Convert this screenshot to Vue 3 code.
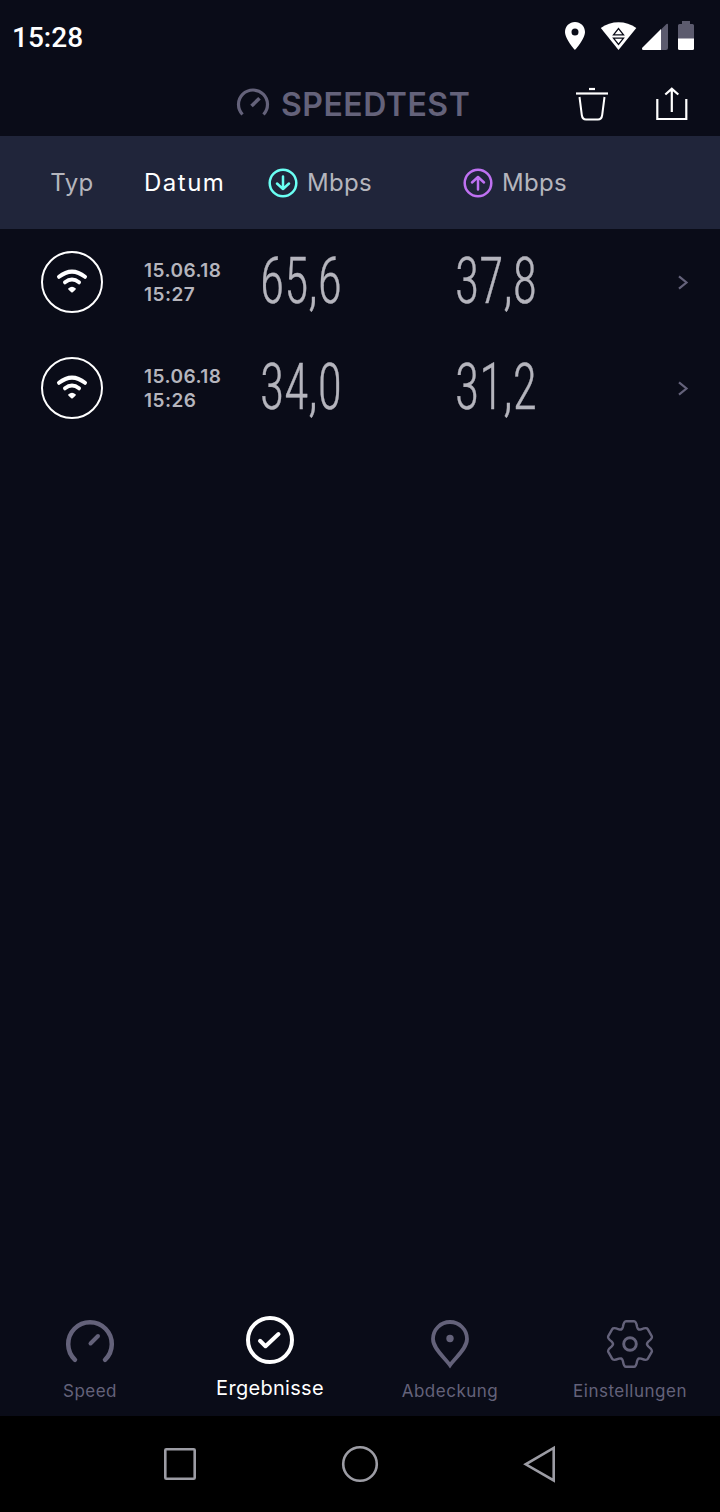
<template>
  <div class="screen">
    <!-- Status bar -->
    <div class="status-bar">
      <span class="clock">15:28</span>
      <svg class="status-icons" width="132" height="32" viewBox="0 0 132 32">
        <path fill="#fff" fill-rule="evenodd" d="M11 2C5.500 2 1 6.300 1 12c0 7 10 18 10 18s10-11 10-18C21 6.300 16.500 2 11 2zm0 6.500a3.500 3.500 0 1 1 0 7 3.500 3.500 0 0 1 0-7z" />
        <path fill="#fff" d="M36.800 8C47 .3 62 .3 72.300 8L54.500 30z" />
        <path fill="#fff" stroke="#0a0c18" stroke-width="1.300" d="M49.500 14.800 54.500 8.500l5 6.300zM49.500 18.200h10l-5 6.300z" />
        <path fill="#5c5b6e" d="M97 9.500 102.500 4q1.500-1 1.500.8V28q0 2-2 2h-5z" />
        <path fill="#fff" d="M97 9v21H79.500q-2.500-.5-1-2.500z" />
        <path fill="#5c5b6e" d="M114 19V5.500Q114 4 115.500 4H118V1h8v3h2.500q1.500 0 1.500 1.500V19z" />
        <path fill="#fff" d="M114 18.500h16v10q0 1.500-1.500 1.500h-13q-1.500 0-1.500-1.500z" />
      </svg>
    </div>

    <!-- App bar -->
    <header class="app-bar">
      <div class="brand">
        <svg width="34" height="32" viewBox="0 0 34 32" fill="none" stroke="#64627a" stroke-width="3.200">
          <path d="M6.500 26.500A14.500 14.500 0 1 1 27.500 26.500" />
          <path d="M15.500 18 23.500 10.300" stroke-width="3.600" />
        </svg>
        <span class="brand-name">SPEEDTEST</span>
      </div>
      <div class="actions">
        <svg width="32" height="34" viewBox="0 0 32 34" fill="none" stroke="#fff" stroke-width="2">
          <path d="M13 2h6" stroke-width="2.200" />
          <path d="M0 6.500h32" stroke-width="2.200" />
          <path d="M3.500 10 5.800 28q.6 4.500 4.200 4.500h12q3.600 0 4.200-4.500L28.500 10" />
        </svg>
        <svg width="32" height="34" viewBox="0 0 32 34" fill="none" stroke="#fff" stroke-width="2.200">
          <path d="M1.300 12v20h29V12" />
          <path d="M15.800 25V2.500M9.300 7.500l6.500-5.700 6.500 5.700" />
        </svg>
      </div>
    </header>

    <!-- Column titles -->
    <div class="grid table-head">
      <span class="col-type">Typ</span>
      <span class="active">Datum</span>
      <span v-for="dir in directions" :key="dir.name" class="unit" :class="dir.name">
        <svg width="30" height="30" viewBox="0 0 30 30" fill="none" stroke="currentColor" stroke-width="2.500">
          <circle cx="15" cy="15" r="13.300" />
          <path :d="dir.arrow" stroke-linecap="round" stroke-linejoin="round" />
        </svg>
        <span class="unit-name">Mbps</span>
      </span>
    </div>

    <!-- Results -->
    <main class="results">
      <div v-for="result in results" :key="result.time" class="grid row">
        <span class="col-type">
          <svg width="62" height="62" viewBox="0 0 62 62" fill="none" stroke="#fff">
            <circle cx="31" cy="31" r="30" stroke-width="2" />
            <g stroke-width="4" stroke-linecap="round">
              <path d="M18 25.800q13-10.400 26 0" />
              <path d="M24 31.300q7-5.600 14 0" />
            </g>
            <path fill="#fff" stroke="none" d="M27.200 37.500q3.800-3.400 7.600 0 .6 1-3.800 4.200-4.400-3.200-3.800-4.200z" />
          </svg>
        </span>
        <span class="date">{{ result.date }}<br />{{ result.time }}</span>
        <svg v-for="value in [result.down, result.up]" :key="value" class="speed" width="84" height="62">
          <text x="0" y="52" textLength="82" lengthAdjust="spacingAndGlyphs">{{ value }}</text>
        </svg>
        <svg class="chevron" width="12" height="16" viewBox="0 0 12 16" fill="none" stroke="#64627a" stroke-width="2.200">
          <path d="M2 2.300l7.500 6.200L2 14.700" />
        </svg>
      </div>
    </main>

    <!-- Tabs -->
    <nav class="tabs">
      <div class="tab">
        <svg width="50" height="50" viewBox="-25 -25 50 50" fill="none" stroke="currentColor" stroke-width="4.500" stroke-linecap="round">
          <path d="M-15 15.800A21.800 21.800 0 1 1 15 15.800" />
          <path d="M.5-.5 8-8" stroke-width="4" />
        </svg>
        <span>Speed</span>
      </div>
      <div class="tab selected">
        <svg width="50" height="50" viewBox="-25 -25 50 50" fill="none" stroke="currentColor" stroke-width="4" stroke-linecap="round" stroke-linejoin="round">
          <circle r="22" />
          <path d="M-10 .8-4.500 6.200 8.500-6" />
        </svg>
        <span>Ergebnisse</span>
      </div>
      <div class="tab">
        <svg width="50" height="50" viewBox="-25 -25 50 50" fill="none" stroke="currentColor" stroke-width="3.800">
          <path d="M0 21.200C-5.500 13.500-17 4.500-17-5A17 17 0 0 1 17-5C17 4.500 5.500 13.500 0 21.200z" />
          <circle cy="-5.500" r="3.700" fill="currentColor" stroke="none" />
        </svg>
        <span>Abdeckung</span>
      </div>
      <div class="tab">
        <svg width="50" height="50" viewBox="-25 -25 50 50" fill="none" stroke="currentColor" stroke-width="2.400" stroke-linejoin="round">
          <path :d="gear" />
          <circle r="6.300" stroke-width="2.900" />
        </svg>
        <span>Einstellungen</span>
      </div>
    </nav>

    <!-- System navigation -->
    <div class="system-nav">
      <svg width="40" height="40" viewBox="-20 -20 40 40"><rect x="-14.700" y="-14.700" width="29.400" height="29.400" rx="1" /></svg>
      <svg width="40" height="40" viewBox="-20 -20 40 40"><circle r="16.800" /></svg>
      <svg width="40" height="40" viewBox="-20 -20 40 40"><path d="M13.700-16v32.500L-14.300.3z" /></svg>
    </div>
  </div>
</template>

<script setup>
const directions = [
  { name: 'down', arrow: 'M15 8.500V21M9 15.500l6 5.500 6-5.500' },
  { name: 'up', arrow: 'M15 21.500V9M9 14.500 15 9l6 5.500' }
]

const results = [
  { date: '15.06.18', time: '15:27', down: '65,6', up: '37,8' },
  { date: '15.06.18', time: '15:26', down: '34,0', up: '31,2' }
]

// One tooth of the gear, repeated six times around the centre
const tooth = [[-8.6, -14.6], [-7.6, -15.2], [-7.1, -17], [-6.2, -22.8], [-4, -22.8], [4, -22.8], [6.2, -22.8], [7.1, -17], [7.6, -15.2], [8.6, -14.6]]

const gear = Array.from({ length: 6 }, (_, i) => {
  const a = (i * Math.PI) / 3
  const p = tooth.map(([x, y]) =>
    `${(x * Math.cos(a) - y * Math.sin(a)).toFixed(2)} ${(x * Math.sin(a) + y * Math.cos(a)).toFixed(2)}`
  )
  return `${i ? 'L' : 'M'}${p[0]}Q${p[1]} ${p[2]}Q${p[3]} ${p[4]}L${p[5]}Q${p[6]} ${p[7]}Q${p[8]} ${p[9]}`
}).join('') + 'Z'
</script>

<style>
body {
  background: #0a0c18;
}
</style>

<style scoped>
.screen {
  width: 720px;
  height: 1512px;
  display: flex;
  flex-direction: column;
  overflow: hidden;
  background: #0a0c18;
  color: #b5b5bd;
  font-family: Inter, "Open Sans", sans-serif;
}

svg {
  display: block;
  flex: none;
}

/* Status bar */
.status-bar {
  height: 72px;
  box-sizing: border-box;
  padding: 20px 24px 0 12px;
  display: flex;
  justify-content: space-between;
}
.clock {
  font-family: Roboto, sans-serif;
  font-size: 28px;
  line-height: 35px;
  font-weight: 500;
  color: #fff;
}

/* App bar */
.app-bar {
  height: 64px;
  box-sizing: border-box;
  padding: 0 32px 0 236px;
  display: flex;
  align-items: center;
  justify-content: space-between;
}
.brand {
  display: flex;
  align-items: center;
  gap: 11px;
  color: #64627a;
}
.brand-name {
  font-size: 32px;
  font-weight: 600;
  letter-spacing: 0.5px;
  white-space: nowrap;
}
.actions {
  display: flex;
  gap: 48px;
}

/* Table */
.grid {
  display: grid;
  grid-template-columns: 144px 116px 195px 195px 70px;
  align-items: center;
}
.col-type {
  display: flex;
  justify-content: center;
  letter-spacing: 0.4px;
}
.table-head {
  height: 93px;
  background: #20253a;
  font-size: 24px;
}
.active {
  color: #fff;
  letter-spacing: 1.5px;
}
.unit {
  display: flex;
  align-items: center;
  gap: 9px;
  padding-left: 8px;
}
.unit-name {
  color: #b5b5bd;
  letter-spacing: 0.3px;
}
.down {
  color: #6afff3;
}
.up {
  color: #bf71f2;
}
.results {
  flex: 1;
}
.row {
  height: 106px;
}
.date {
  padding-top: 2px;
  font-size: 19px;
  font-weight: 600;
  line-height: 24px;
  letter-spacing: 0.45px;
}
.speed {
  overflow: visible;
  font-family: Roboto, sans-serif;
  font-stretch: 75%;
  font-size: 65px;
  font-weight: 300;
  fill: #b5b5bd;
  stroke: #b5b5bd;
  stroke-width: 0.4;
}
.chevron {
  margin-left: 27px;
}

/* Tabs */
.tabs {
  height: 97px;
  display: grid;
  grid-template-columns: repeat(4, 180px);
}
.tab {
  display: flex;
  flex-direction: column;
  align-items: center;
  gap: 11px;
  color: #64627a;
  font-size: 17px;
  line-height: 22px;
  letter-spacing: 0.5px;
}
.selected {
  gap: 12px;
  margin-top: -4px;
  color: #fff;
  font-size: 20px;
  letter-spacing: 0.3px;
}

/* System navigation */
.system-nav {
  height: 96px;
  display: flex;
  align-items: center;
  justify-content: center;
  gap: 140px;
  background: #000;
  fill: none;
  stroke: #9c9ca4;
  stroke-width: 2.600;
}
</style>
